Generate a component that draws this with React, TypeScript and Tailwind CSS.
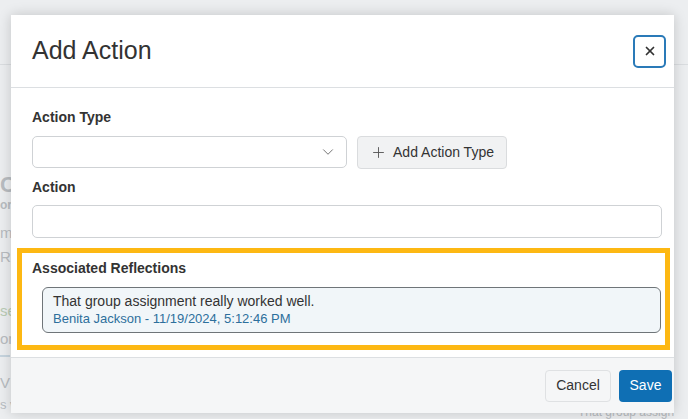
import { ChevronDown, Plus, X } from 'lucide-react'

const font = { fontFamily: '"Liberation Sans", Arial, sans-serif' }

function Backdrop() {
   return (
      <div className="absolute inset-0 bg-[#eceef0] text-[#b8bcc0] text-[15px]" style={font}>
         <div className="absolute left-0 top-[64px] w-full border-t border-[#dadde0]" />
         <div className="absolute left-0 top-[168px] text-[22px] font-bold">C</div>
         <div className="absolute left-0 top-[196px] text-[12px] font-bold">or</div>
         <div className="absolute left-0 top-[222px]">m</div>
         <div className="absolute left-0 top-[246px]">Re</div>
         <div className="absolute left-0 top-[300px] text-[#b9cbb4]">se</div>
         <div className="absolute left-0 top-[328px]">or</div>
         <div className="absolute left-0 top-[355px] w-[10px] border-t-2 border-[#c6d4de]" />
         <div className="absolute left-0 top-[372px]">V</div>
         <div className="absolute left-0 top-[395px] text-[13px]">s v</div>
         <div className="absolute left-[578px] top-[406px] text-[12px] leading-[12px] whitespace-nowrap">That group assign</div>
      </div>
   )
}

export default function App() {
   return (
      <div className="relative w-[688px] h-[419px] overflow-hidden" style={font}>
         <Backdrop />
         <div className="relative pl-[11px] pt-[15px]">
            <div className="w-[663px] h-[398px] bg-white shadow-[0_0_12px_rgba(0,0,0,0.18)] flex flex-col text-[#333]">
               {/* Header */}
               <div className="h-[73px] shrink-0 flex items-center justify-between pl-[21px] pr-[8px] border-b border-[#dcdfe2]">
                  <h1 className="text-[25px] leading-none text-[#333] pb-[2px]">Add Action</h1>
                  <button className="w-[33px] h-[33px] rounded-[5px] border-2 border-[#2a7ab8] flex items-center justify-center text-[#333]">
                     <X size={14} strokeWidth={3} />
                  </button>
               </div>

               {/* Body */}
               <div className="flex-1 pl-[21px] pr-[12px] pt-[22px]">
                  <label className="block text-[14px] font-bold leading-none">Action Type</label>
                  <div className="flex gap-[10px] mt-[12px]">
                     <div className="w-[315px] h-[32px] rounded-[5px] border border-[#cfd2d5] flex items-center justify-end pr-[9px]">
                        <ChevronDown size={18} strokeWidth={1.2} className="text-[#666]" />
                     </div>
                     <button className="w-[150px] h-[33px] rounded-[4px] border border-[#dadcde] bg-[#f1f2f3] flex items-center justify-center gap-[6px] text-[14px] text-[#333]">
                        <Plus size={17} strokeWidth={1.3} className="text-[#555]" />
                        Add Action Type
                     </button>
                  </div>

                  <label className="block text-[14px] font-bold leading-none mt-[11px]">Action</label>
                  <div className="h-[33px] rounded-[5px] border border-[#cfd2d5] mt-[11px]" />

                  <div className="-ml-[15px] mr-[-8px] mt-[10px] border-[5px] border-[#fdb813] pl-[10px] pr-[4px] pt-[8px] pb-[12px]">
                     <div className="text-[14px] font-bold leading-none">Associated Reflections</div>
                     <div className="ml-[10px] mt-[12px] h-[46px] rounded-[6px] border border-[#6f7579] bg-[#f1f6f9] px-[10px] flex flex-col justify-center">
                        <div className="text-[14px] leading-[17px] text-[#333]">That group assignment really worked well.</div>
                        <div className="text-[13px] leading-[17px] text-[#2d6f9c]">Benita Jackson - 11/19/2024, 5:12:46 PM</div>
                     </div>
                  </div>
               </div>

               {/* Footer */}
               <div className="h-[56px] shrink-0 bg-[#f5f6f7] border-t border-[#dcdfe2] flex items-center justify-end gap-[8px] pr-[2px]">
                  <button className="h-[32px] w-[66px] rounded-[4px] border border-[#dfe1e3] bg-[#f5f6f7] text-[14px] text-[#333]">Cancel</button>
                  <button className="h-[32px] w-[53px] rounded-[4px] bg-[#0f6fb4] text-[14px] text-white">Save</button>
               </div>
            </div>
         </div>
      </div>
   )
}
